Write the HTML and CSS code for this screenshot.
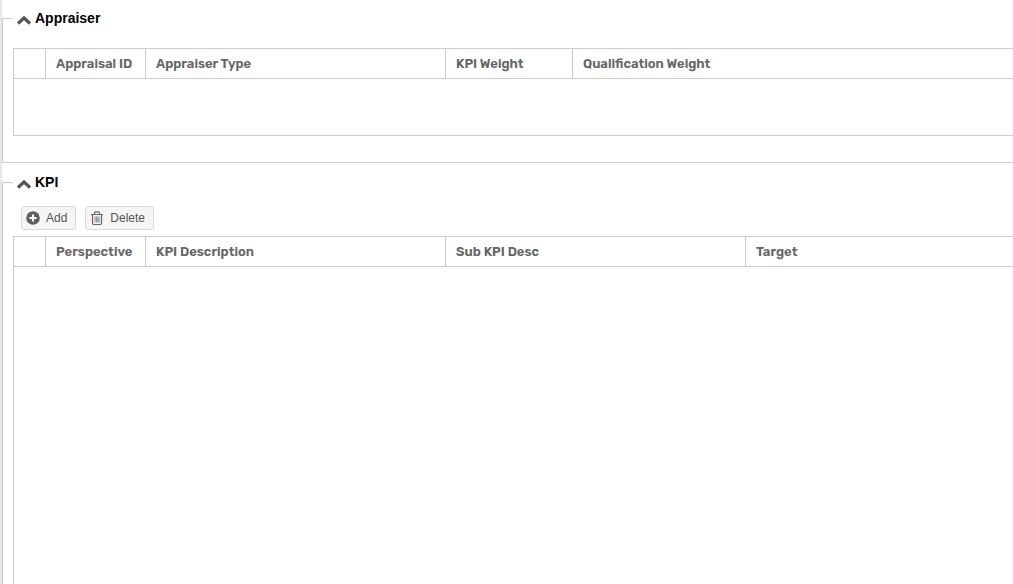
FILE: index.html
```
<!DOCTYPE html>
<html lang="en">
<head>
    <meta charset="utf-8">
    <title>Appraisal</title>
    <link rel="stylesheet" href="styles.css">
</head>
<body>
    <fieldset class="section">
        <legend class="section-title">
            <button type="button" class="toggle" aria-label="Collapse Appraiser">
                <svg width="14" height="10" viewBox="0 0 14 10"><path d="M1 8.5L7 3L13 8.5" fill="none" stroke="#54565a" stroke-width="3.2"/></svg>
            </button>
            <span>Appraiser</span>
        </legend>
        <table class="grid">
            <thead>
                <tr>
                    <th class="col-select"></th>
                    <th class="col-id">Appraisal ID</th>
                    <th class="col-wide">Appraiser Type</th>
                    <th class="col-weight">KPI Weight</th>
                    <th>Qualification Weight</th>
                </tr>
            </thead>
            <tbody>
                <tr><td class="empty" colspan="5"></td></tr>
            </tbody>
        </table>
    </fieldset>

    <fieldset class="section section-kpi">
        <legend class="section-title">
            <button type="button" class="toggle" aria-label="Collapse KPI">
                <svg width="14" height="10" viewBox="0 0 14 10"><path d="M1 8.5L7 3L13 8.5" fill="none" stroke="#54565a" stroke-width="3.2"/></svg>
            </button>
            <span>KPI</span>
        </legend>
        <div class="toolbar">
            <button type="button" class="btn">
                <svg width="14" height="14" viewBox="0 0 14 14">
                    <circle cx="7" cy="7" r="6.8" fill="#606060"/>
                    <path d="M7 3.5v7M3.5 7h7" stroke="#fff" stroke-width="2"/>
                </svg>
                <span>Add</span>
            </button>
            <button type="button" class="btn">
                <svg width="14" height="14" viewBox="0 0 14 14" fill="none" stroke="#666">
                    <path d="M1 3.5h12M4.5 3.5v-1.500q0-1.200 1-1.200h3q1 0 1 1.200v1.500" stroke-width="1.2"/>
                    <path d="M2.5 3.5v8.500q0 1.500 1.500 1.500h6q1.500 0 1.500-1.500v-8.500" stroke-width="1.2"/>
                    <path d="M5 5.500v6" stroke="#b08050"/>
                    <path d="M7 5.500v6" stroke-width="1.2"/>
                    <path d="M9 5.500v6" stroke="#6080b0"/>
                </svg>
                <span>Delete</span>
            </button>
        </div>
        <table class="grid">
            <thead>
                <tr>
                    <th class="col-select"></th>
                    <th class="col-id">Perspective</th>
                    <th class="col-wide">KPI Description</th>
                    <th class="col-wide">Sub KPI Desc</th>
                    <th>Target</th>
                </tr>
            </thead>
            <tbody>
                <tr><td class="empty empty-tall" colspan="5"></td></tr>
            </tbody>
        </table>
    </fieldset>
</body>
</html>
```

FILE: styles.css
```
* {
    box-sizing: border-box;
}
body {
    min-height: 100vh;
    margin: 0;
    padding-top: 8px;
    border-left: 2px solid #e6e6f0;
    background: #fff;
    font-family: "Liberation Sans", Arial, sans-serif;
}
.section {
    min-width: 0;
    margin: 0;
    padding: 20px 0 26px 10px;
    border: 1px solid #ccc;
    border-right: 0;
}
.section-kpi {
    margin-top: 9px;
    padding-top: 14px;
    padding-bottom: 0;
    border-bottom: 0;
}
.section-title {
    display: flex;
    align-items: center;
    gap: 4px;
    width: 100%;
    height: 20px;
    padding: 0 0 0 4px;
    color: #000;
    font-size: 14px;
    font-weight: bold;
    line-height: 20px;
}
.toggle {
    display: flex;
    padding: 4px 0 0;
    border: 0;
    background: none;
}

/* Toolbar */
.toolbar {
    display: flex;
    gap: 9px;
    padding: 0 8px 6px;
}
.btn {
    display: flex;
    align-items: center;
    gap: 6px;
    height: 24px;
    padding: 0 8px 0 4px;
    border: 1px solid #d9d9d9;
    border-radius: 3px;
    background: #f5f5f5;
    color: #555;
    font-family: inherit;
    font-size: 12px;
}

/* Data grids */
.grid {
    width: 100%;
    table-layout: fixed;
    border-spacing: 0;
}
.grid th {
    height: 31px;
    padding: 0 0 0 10px;
    border: 1px solid #ccc;
    border-right: 0;
    color: #666;
    font-family: Rubik, Roboto, sans-serif;
    font-size: 13px;
    font-weight: 600;
    text-align: left;
}
.col-select {
    width: 32px;
}
.col-id {
    width: 100px;
}
.col-wide {
    width: 300px;
}
.col-weight {
    width: 127px;
}
.empty {
    height: 57px;
    padding: 0;
    border-left: 1px solid #ccc;
    border-bottom: 1px solid #ccc;
}
/* fills the rest of the window */
.empty-tall {
    height: calc(100vh - 267px);
    border-bottom: 0;
}
```
